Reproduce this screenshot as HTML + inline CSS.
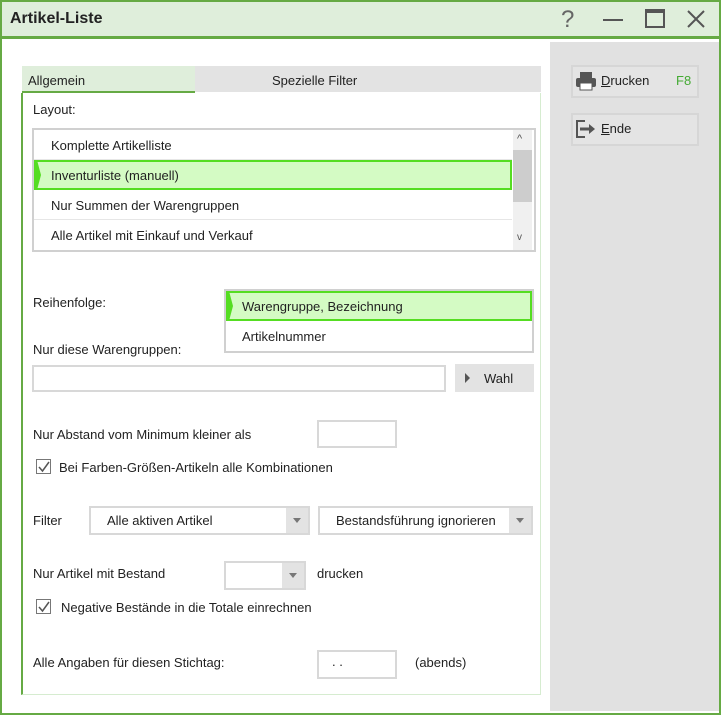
<!DOCTYPE html>
<html><head><meta charset="utf-8"><style>
*{margin:0;padding:0;box-sizing:border-box}
body{width:721px;height:715px;position:relative;overflow:hidden;background:#fff;font-family:"Liberation Sans",sans-serif;font-size:13px;color:#222}
.a{position:absolute}
.t{position:absolute;white-space:nowrap}
.inp{position:absolute;background:#fff;border:2px solid #d8d8d8}
.dd{position:absolute;background:#fff;border:2px solid #d8d8d8}
.dd .b{position:absolute;right:0;top:0;bottom:0;width:22px;background:#e3e3e3}
.dd .b:after{content:"";position:absolute;left:7px;top:10px;border-left:4px solid transparent;border-right:4px solid transparent;border-top:5px solid #777}
.cb{position:absolute;width:15px;height:15px;border:1px solid #777;background:#fff}
</style></head><body>
<div class="a" style="left:0;top:0;width:721px;height:715px;border:2px solid #66aa44"></div>
<div class="a" style="left:2px;top:2px;width:717px;height:37px;background:#dfeedb;border-bottom:3px solid #66aa44"></div>
<div class="t" style="left:10px;top:10px;font-size:16px;font-weight:bold;color:#222">Artikel-Liste</div>
<div class="t" style="left:561px;top:6px;font-size:24px;color:#666;font-weight:300">?</div>
<div class="a" style="left:603px;top:19px;width:20px;height:2px;background:#555"></div>
<div class="a" style="left:645px;top:9px;width:20px;height:19px;border:2px solid #555;border-top-width:4px"></div>
<svg class="a" style="left:686px;top:9px" width="20" height="20"><path d="M2 2L18 18M18 2L2 18" stroke="#555" stroke-width="2"/></svg>
<div class="a" style="left:550px;top:42px;width:169px;height:669px;background:#e1e1e1"></div>
<div class="a" style="left:571px;top:65px;width:128px;height:33px;border:2px solid #d6d6d6;background:#e4e4e4"></div>
<svg class="a" style="left:575px;top:71px" width="22" height="20"><rect x="5" y="1" width="12" height="6" fill="#555"/><rect x="1" y="7" width="20" height="9" rx="2" fill="#555"/><rect x="5" y="12" width="12" height="7" fill="#fff" stroke="#555"/></svg>
<div class="t" style="left:601px;top:73px"><span style="text-decoration:underline">D</span>rucken</div>
<div class="t" style="left:676px;top:73px;color:#44aa33">F8</div>
<div class="a" style="left:571px;top:113px;width:128px;height:33px;border:2px solid #d6d6d6;background:#e4e4e4"></div>
<svg class="a" style="left:575px;top:119px" width="22" height="20"><path d="M10 2H2V18H10" fill="none" stroke="#555" stroke-width="2"/><path d="M5 10H15" stroke="#555" stroke-width="3"/><path d="M14 5L20 10L14 15Z" fill="#555"/></svg>
<div class="t" style="left:601px;top:121px"><span style="text-decoration:underline">E</span>nde</div>
<div class="a" style="left:22px;top:66px;width:519px;height:26px;background:#e3e3e3"></div>
<div class="a" style="left:22px;top:66px;width:173px;height:27px;background:#dfeedb;border-bottom:2px solid #66aa44"></div>
<div class="t" style="left:28px;top:73px">Allgemein</div>
<div class="t" style="left:272px;top:73px">Spezielle Filter</div>
<div class="a" style="left:21px;top:93px;width:520px;height:602px;border:1px solid #d6ecd0;border-left:2px solid #66aa44;border-top:none"></div>
<div class="t" style="left:33px;top:102px">Layout:</div>
<div class="a" style="left:32px;top:128px;width:504px;height:124px;border:2px solid #d0d0d0;background:#fff"></div>
<div class="a" style="left:34px;top:159px;width:478px;height:1px;background:#e6e6e6"></div>
<div class="a" style="left:34px;top:219px;width:478px;height:1px;background:#e6e6e6"></div>
<div class="t" style="left:51px;top:138px">Komplette Artikelliste</div>
<div class="a" style="left:34px;top:160px;width:478px;height:30px;background:#d4fbc4;border:2px solid #55dd22"></div>
<svg class="a" style="left:34px;top:160px" width="8" height="30"><path d="M0 0H3L7 15L3 30H0Z" fill="#55dd22"/></svg>
<div class="t" style="left:51px;top:168px">Inventurliste (manuell)</div>
<div class="t" style="left:51px;top:198px">Nur Summen der Warengruppen</div>
<div class="t" style="left:51px;top:228px">Alle Artikel mit Einkauf und Verkauf</div>
<div class="a" style="left:513px;top:130px;width:19px;height:120px;background:#f0f0f0"></div>
<div class="a" style="left:513px;top:150px;width:19px;height:52px;background:#cdcdcd"></div>
<div class="t" style="left:517px;top:133px;font-size:11px;color:#555">^</div>
<div class="t" style="left:517px;top:232px;font-size:10px;color:#555">v</div>
<div class="t" style="left:33px;top:295px">Reihenfolge:</div>
<div class="a" style="left:224px;top:289px;width:310px;height:64px;border:2px solid #d0d0d0;background:#fff"></div>
<div class="a" style="left:226px;top:291px;width:306px;height:30px;background:#d4fbc4;border:2px solid #55dd22"></div>
<svg class="a" style="left:226px;top:291px" width="8" height="30"><path d="M0 0H3L7 15L3 30H0Z" fill="#55dd22"/></svg>
<div class="t" style="left:242px;top:299px">Warengruppe, Bezeichnung</div>
<div class="t" style="left:242px;top:329px">Artikelnummer</div>
<div class="t" style="left:33px;top:342px">Nur diese Warengruppen:</div>
<div class="inp" style="left:32px;top:365px;width:414px;height:27px"></div>
<div class="a" style="left:455px;top:364px;width:79px;height:28px;background:#e3e3e3"></div>
<svg class="a" style="left:465px;top:373px" width="6" height="10"><path d="M0 0L5 5L0 10Z" fill="#555"/></svg>
<div class="t" style="left:484px;top:371px">Wahl</div>
<div class="t" style="left:33px;top:427px">Nur Abstand vom Minimum kleiner als</div>
<div class="inp" style="left:317px;top:420px;width:80px;height:28px"></div>
<div class="cb" style="left:36px;top:459px"></div>
<svg class="a" style="left:38px;top:461px" width="12" height="12"><path d="M1 6L4.5 10L11 1" fill="none" stroke="#555" stroke-width="1.5"/></svg>
<div class="t" style="left:59px;top:460px">Bei Farben-Größen-Artikeln alle Kombinationen</div>
<div class="t" style="left:33px;top:513px">Filter</div>
<div class="dd" style="left:89px;top:506px;width:221px;height:29px"><div class="b"></div></div>
<div class="t" style="left:107px;top:513px">Alle aktiven Artikel</div>
<div class="dd" style="left:318px;top:506px;width:215px;height:29px"><div class="a" style="left:16px;top:5px;width:166px;overflow:hidden;white-space:nowrap">Bestandsführung ignorieren</div><div class="b"></div></div>
<div class="t" style="left:33px;top:566px">Nur Artikel mit Bestand</div>
<div class="dd" style="left:224px;top:561px;width:82px;height:29px"><div class="b"></div></div>
<div class="t" style="left:317px;top:566px">drucken</div>
<div class="cb" style="left:36px;top:599px"></div>
<svg class="a" style="left:38px;top:601px" width="12" height="12"><path d="M1 6L4.5 10L11 1" fill="none" stroke="#555" stroke-width="1.5"/></svg>
<div class="t" style="left:61px;top:600px">Negative Bestände in die Totale einrechnen</div>
<div class="t" style="left:33px;top:655px">Alle Angaben für diesen Stichtag:</div>
<div class="inp" style="left:317px;top:650px;width:80px;height:29px"></div>
<div class="t" style="left:332px;top:654px">. .</div>
<div class="t" style="left:415px;top:655px">(abends)</div>
</body></html>
